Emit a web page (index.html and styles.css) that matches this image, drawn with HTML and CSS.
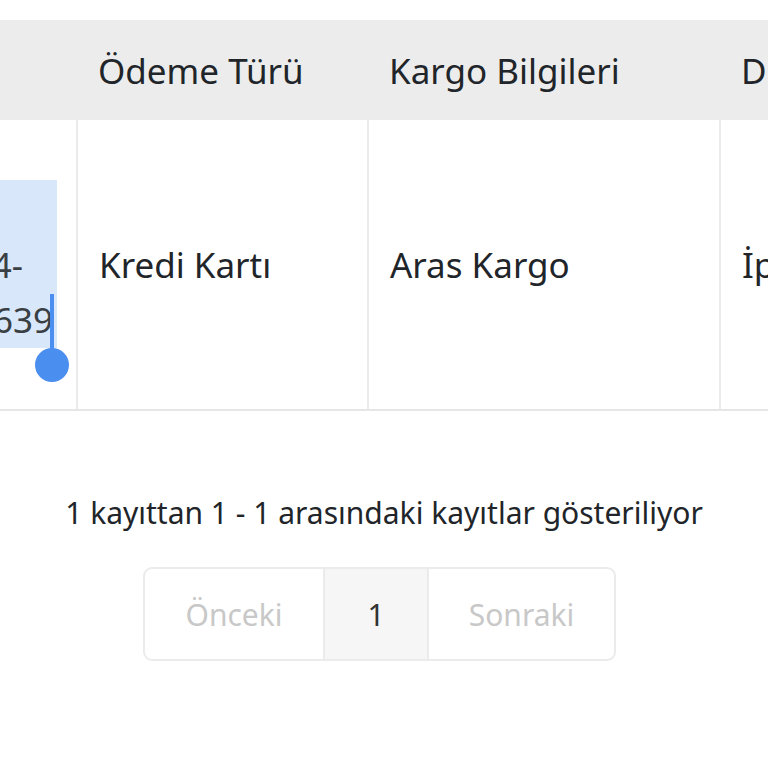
FILE: index.html
```html
<!DOCTYPE html>
<html lang="tr">
<head>
<meta charset="utf-8">
<title>Siparişler</title>
<link rel="stylesheet" href="styles.css">
</head>
<body>
<div class="scroller">
  <table class="orders">
    <colgroup>
      <col class="col-no">
      <col class="col-pay">
      <col class="col-cargo">
      <col class="col-state">
    </colgroup>
    <thead>
      <tr>
        <th>Sipariş No</th>
        <th>Ödeme Türü</th>
        <th>Kargo Bilgileri</th>
        <th>Durum</th>
      </tr>
    </thead>
    <tbody>
      <tr>
        <td class="cell-no">
          <div class="selected">
            <span class="line">SP-</span>
            <span class="line short">20240604-</span>
            <span class="line">1526639</span>
            <span class="handle"></span>
          </div>
        </td>
        <td>Kredi Kartı</td>
        <td>Aras Kargo</td>
        <td>İptal</td>
      </tr>
    </tbody>
  </table>
</div>
<div class="info">1 kayıttan 1 - 1 arasındaki kayıtlar gösteriliyor</div>
<nav class="pager">
  <span class="page disabled prev">Önceki</span>
  <span class="page current">1</span>
  <span class="page disabled next">Sonraki</span>
</nav>
</body>
</html>
```
FILE: styles.css
```css
html, body {
  margin: 0;
  padding: 0;
  background: #ffffff;
}
body {
  font-family: "Noto Sans", sans-serif;
  color: #212529;
  padding-top: 20px;
  width: 768px;
  overflow: hidden;
}
.scroller {
  overflow: hidden;
  width: 768px;
}
.orders {
  border-collapse: collapse;
  margin-left: -223px;
  table-layout: fixed;
  width: 1143px;
}
.col-no { width: 300px; }
.col-pay { width: 291px; }
.col-cargo { width: 352px; }
.col-state { width: 200px; }
.orders th {
  background: #ececec;
  height: 100px;
  font-weight: 400;
  font-size: 35px;
  text-align: left;
  padding: 0 0 0 21px;
  white-space: nowrap;
  overflow: hidden;
  box-sizing: border-box;
}
.orders th:first-child {
  color: transparent;
}
.orders td {
  height: 290px;
  font-size: 35px;
  padding: 0 0 0 21px;
  vertical-align: middle;
  border-left: 2px solid #ebebeb;
  border-bottom: 2px solid #e6e6e6;
  white-space: nowrap;
  overflow: hidden;
  box-sizing: border-box;
}
.orders td:first-child {
  border-left: none;
}
.orders td.cell-no {
  padding: 0 19px 0 0;
  overflow: visible;
}
.selected {
  position: relative;
  background: #d9e7fb;
  color: #3a3f44;
  display: flex;
  flex-direction: column;
  align-items: flex-end;
  padding: 0 4px 0 0;
  height: 168px;
  justify-content: center;
  margin-top: -1px;
}
.selected .line {
  display: block;
  line-height: 55px;
}
.selected .line.short {
  margin-right: 30px;
}
.selected .line:first-child {
  visibility: hidden;
}
.handle {
  position: absolute;
  right: 3px;
  top: 114px;
  width: 4px;
  height: 70px;
  background: #4a8ef0;
}
.handle::after {
  content: "";
  position: absolute;
  left: -15px;
  bottom: -18px;
  width: 34px;
  height: 34px;
  border-radius: 50%;
  background: #4a8ef0;
}
.info {
  text-align: center;
  font-size: 30px;
  margin-top: 84px;
  line-height: 36px;
  color: #212529;
}
.pager {
  display: flex;
  width: 473px;
  margin: 36px 0 0 143px;
  height: 94px;
  border: 2px solid #ebebeb;
  border-radius: 9px;
  box-sizing: border-box;
  overflow: hidden;
}
.page {
  display: flex;
  align-items: center;
  justify-content: center;
  font-size: 30px;
}
.page.disabled {
  color: #c8c8c8;
}
.prev {
  width: 178px;
  border-right: 2px solid #ebebeb;
}
.current {
  width: 102px;
  background: #f6f6f6;
  border-right: 2px solid #ebebeb;
  color: #333;
}
.next {
  flex: 1;
}
```
